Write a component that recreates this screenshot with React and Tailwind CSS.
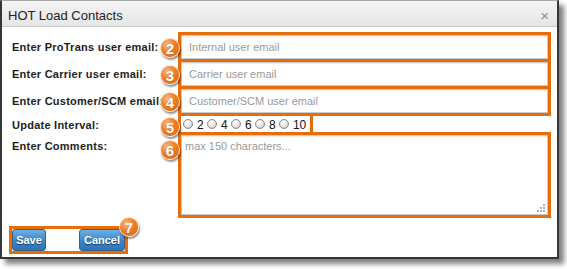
import React from "react";

function Badge({ n, className }) {
  return (
    <span
      className={`absolute z-10 w-[20px] h-[20px] rounded-full border-[1.5px] border-[#fbe3cf] bg-[radial-gradient(circle_at_35%_30%,#fab882_0%,#ef7e24_45%,#d8600a_100%)] shadow-[1px_2px_2px_rgba(0,0,0,0.45)] flex items-center justify-center text-white font-bold text-[15px] leading-none [text-shadow:0_0_1px_rgba(120,50,0,0.6)] ${className}`}
    >
      {n}
    </span>
  );
}

function Radio({ label }) {
  return (
    <span className="flex items-center">
      <span className="w-[10px] h-[10px] rounded-full border border-[#8a8a8a] bg-[radial-gradient(circle_at_40%_35%,#ffffff_0%,#e9e9e9_45%,#b9b9b9_100%)] mr-[4px]" />
      <span className="text-[12px] leading-[14px] mt-[2px] text-[#111]">{label}</span>
    </span>
  );
}

const labelCls =
  "w-[166px] shrink-0 whitespace-nowrap text-[11px] leading-[13px] font-bold tracking-[0.25px] text-[#1e1e1e]";

const inputCls =
  "block w-full h-[24px] border border-[#c9c9c9] bg-white px-[7px] text-[11px] text-[#333] placeholder:text-[#9a9a9a] shadow-[inset_0_1px_1px_rgba(0,0,0,0.08)] outline-none";

export default function App() {
  return (
    <div className="w-[567px] h-[269px] bg-white overflow-hidden font-['Liberation_Sans',Arial,sans-serif]">
      <div className="relative w-[559px] h-[259px] bg-white border-x-2 border-b-2 border-t border-x-[#353535] border-b-[#353535] border-t-[#a8a8a8] shadow-[5px_5px_5px_rgba(0,0,0,0.5)] flex flex-col">
        {/* Title bar */}
        <div className="h-[26px] shrink-0 border-b border-[#c8c8c8] bg-[linear-gradient(#f4f4f4,#e6e6e6)] flex items-start justify-between pl-[6px] pr-[8px] pt-[7px]">
          <span className="text-[13px] leading-[15px] text-[#222]">HOT Load Contacts</span>
          <span className="text-[15px] leading-[15px] text-[#8d8d8d]">×</span>
        </div>

        {/* Body */}
        <div className="flex flex-col pt-[5px]">
          {/* Row 1 */}
          <div className="flex pl-[10px]">
            <div className={`${labelCls} pt-[3px] flex items-center`}>Enter ProTrans user email:</div>
            <div className="relative w-[373px] border-x-[3px] border-t-[3px] border-[#e56d0c]">
              <input className={inputCls} placeholder="Internal user email" />
              <Badge n="2" className="left-[-21px] top-[3px]" />
            </div>
          </div>
          {/* Row 2 */}
          <div className="flex pl-[10px]">
            <div className={`${labelCls} pt-[3px] flex items-center`}>Enter Carrier user email:</div>
            <div className="relative w-[373px] border-x-[3px] border-t-[3px] border-[#e56d0c]">
              <input className={inputCls} placeholder="Carrier user email" />
              <Badge n="3" className="left-[-21px] top-[3px]" />
            </div>
          </div>
          {/* Row 3 */}
          <div className="flex pl-[10px]">
            <div className={`${labelCls} py-[3px] flex items-center`}>Enter Customer/SCM email:</div>
            <div className="relative w-[373px] border-[3px] border-[#e56d0c]">
              <input className={inputCls} placeholder="Customer/SCM user email" />
              <Badge n="4" className="left-[-21px] top-[3px]" />
            </div>
          </div>
          {/* Radio row */}
          <div className="flex pl-[10px]">
            <div className={`${labelCls} pt-[3px]`}>Update Interval:</div>
            <div className="relative w-[135px] h-[16px] border-x-[3px] border-[#e56d0c] flex items-center pl-[2px] gap-x-[3.3px]">
              <Radio label="2" />
              <Radio label="4" />
              <Radio label="6" />
              <Radio label="8" />
              <Radio label="10" />
              <Badge n="5" className="left-[-21px] top-[1px]" />
            </div>
          </div>
          {/* Comments row */}
          <div className="flex pl-[10px]">
            <div className={`${labelCls} pt-[8px]`}>Enter Comments:</div>
            <div className="relative w-[373px] h-[86px] border-[3px] border-[#e56d0c]">
              <textarea
                className="block w-full h-full resize-none border border-[#c9c9c9] bg-white p-[3px] text-[11px] leading-[14px] text-[#333] placeholder:text-[#9a9a9a] shadow-[inset_0_1px_1px_rgba(0,0,0,0.08)] outline-none"
                placeholder="max 150 characters..."
              />
              <svg className="absolute right-[3px] bottom-[2px]" width="9" height="9" viewBox="0 0 9 9">
                <rect x="7" y="0" width="2" height="2" fill="#b0b0b0" />
                <rect x="4" y="3" width="2" height="2" fill="#b0b0b0" />
                <rect x="7" y="3" width="2" height="2" fill="#b0b0b0" />
                <rect x="1" y="6" width="2" height="2" fill="#b0b0b0" />
                <rect x="4" y="6" width="2" height="2" fill="#b0b0b0" />
                <rect x="7" y="6" width="2" height="2" fill="#b0b0b0" />
              </svg>
              <Badge n="6" className="left-[-21px] top-[5px]" />
            </div>
          </div>
          {/* Buttons */}
          <div className="pl-[7px] mt-[8px]">
            <div className="relative w-[119px] h-[28px] border-[3px] border-[#e56d0c] flex justify-between bg-white">
              <button className="w-[34px] h-[22px] rounded-[3px] border border-[#3f5f7c] bg-[linear-gradient(#6cb0e6,#3a86c8_55%,#2d75b8)] text-white text-[11px] font-bold leading-none [text-shadow:0_1px_1px_rgba(0,0,0,0.55)]">
                Save
              </button>
              <button className="w-[46px] h-[22px] rounded-[3px] border border-[#3f5f7c] bg-[linear-gradient(#6cb0e6,#3a86c8_55%,#2d75b8)] text-white text-[11px] font-bold leading-none [text-shadow:0_1px_1px_rgba(0,0,0,0.55)]">
                Cancel
              </button>
              <Badge n="7" className="left-[107px] top-[-12px]" />
            </div>
          </div>
        </div>
      </div>
    </div>
  );
}
